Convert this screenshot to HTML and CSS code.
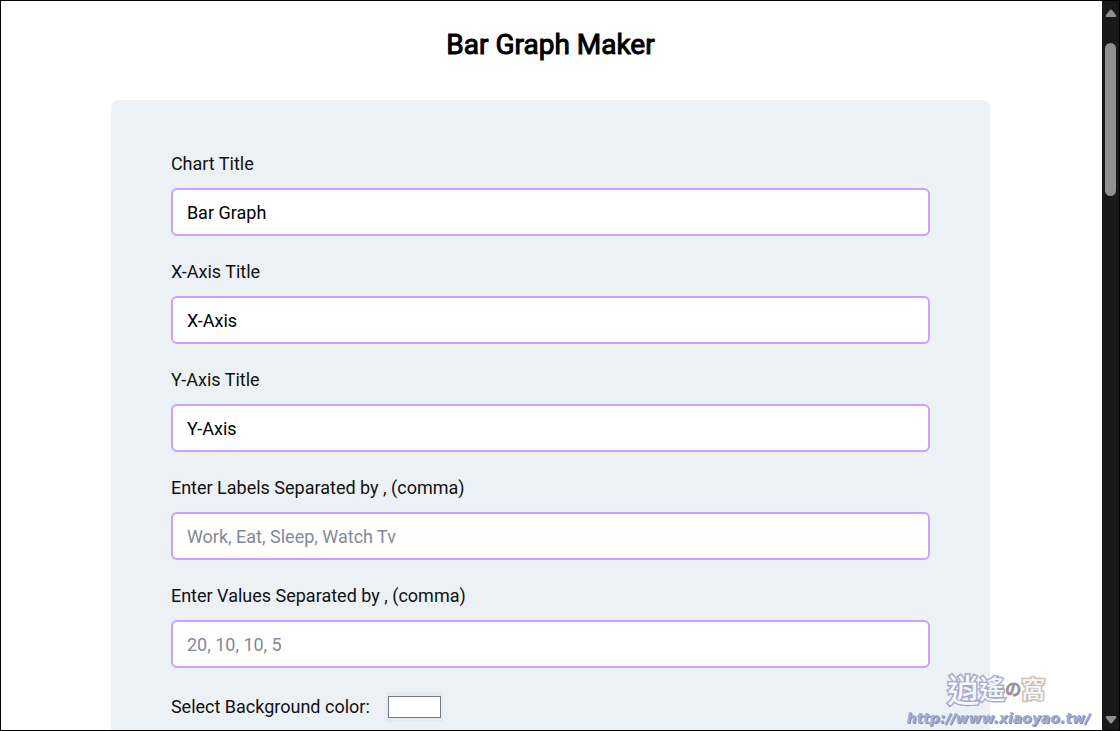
FILE: index.html
```html
<!DOCTYPE html>
<html lang="en">
<head>
<meta charset="utf-8">
<title>Bar Graph Maker</title>
<link rel="stylesheet" href="styles.css">
</head>
<body>
<div class="window">
  <main class="page">
    <h1 class="title">Bar Graph Maker</h1>
    <form class="panel">
      <div class="field">
        <label for="chart-title">Chart Title</label>
        <input class="text-input" id="chart-title" type="text" value="Bar Graph">
      </div>
      <div class="field">
        <label for="x-title">X-Axis Title</label>
        <input class="text-input" id="x-title" type="text" value="X-Axis">
      </div>
      <div class="field">
        <label for="y-title">Y-Axis Title</label>
        <input class="text-input" id="y-title" type="text" value="Y-Axis">
      </div>
      <div class="field">
        <label for="labels">Enter Labels Separated by , (comma)</label>
        <input class="text-input" id="labels" type="text" placeholder="Work, Eat, Sleep, Watch Tv">
      </div>
      <div class="field">
        <label for="values">Enter Values Separated by , (comma)</label>
        <input class="text-input" id="values" type="text" placeholder="20, 10, 10, 5">
      </div>
      <div class="color-field">
        <label for="background">Select Background color:</label>
        <input class="swatch" id="background" type="color" value="#ffffff">
      </div>
    </form>
  </main>
  <div class="scrollbar" aria-hidden="true">
    <svg class="arrow" viewBox="0 0 12 8"><path d="M5 1Q6 0 7 1L11 6Q12 8 10 8H2Q0 8 1 6Z"/></svg>
    <div class="track"><div class="thumb"></div></div>
    <svg class="arrow" viewBox="0 0 12 8"><path d="M5 7Q6 8 7 7L11 2Q12 0 10 0H2Q0 0 1 2Z"/></svg>
  </div>
  <div class="watermark">
    <div class="brand" lang="zh-Hant"><span class="blue">逍</span><span class="violet">遙</span><span class="small">の</span><span class="tan">窩</span></div>
    <a class="site" href="http://www.xiaoyao.tw/">http://www.xiaoyao.tw/</a>
  </div>
</div>
</body>
</html>
```
FILE: styles.css
```css
* { box-sizing: border-box; }
body {
  margin: 0;
  background: #fff;
  color: #111;
  font: 18px/24px Roboto, sans-serif;
}
.window {
  position: relative;
  display: flex;
  height: 100vh;
  border: 1px solid #000;
  overflow: hidden;
}
.page { flex: 1; padding: 26px 2px 0 0; overflow: hidden; }
.title {
  margin: 0 0 37px;
  color: #000;
  font-size: 28px;
  font-weight: 400;
  line-height: 36px;
  text-align: center;
  -webkit-text-stroke: 1px #000;
}
.panel {
  width: 80%;
  margin: 0 auto;
  padding: 52px 60px 60px;
  border-radius: 8px;
  background: #ecf1f6;
}
.field { display: flex; flex-direction: column; gap: 12px; margin-bottom: 24px; }
.text-input {
  width: 100%;
  height: 48px;
  padding: 0 14px;
  border: 2px solid #c9a0fa;
  border-radius: 6px;
  background: #fff;
  color: #000;
  font: inherit;
}
.text-input::placeholder { color: #858994; opacity: 1; }
.color-field { display: flex; align-items: center; gap: 16px; }
.swatch {
  width: 57px;
  height: 30px;
  padding: 0;
  border: 2px solid #e8e9eb;
  background: #e8e9eb;
}
.swatch::-webkit-color-swatch-wrapper { padding: 2px 0; }
.swatch::-webkit-color-swatch { border: 1px solid #777984; }
.scrollbar {
  display: flex;
  flex-direction: column;
  align-items: center;
  gap: 4px;
  width: 17px;
  padding: 8px 0 6px;
  background: #191919;
}
.arrow { width: 12px; height: 8px; fill: #8f9092; }
.track { flex: 1; padding-top: 22px; }
.thumb { width: 11px; height: 153px; border-radius: 6px; background: #8f9092; }
.watermark { position: absolute; right: 29px; bottom: 4px; }
.brand {
  display: flex;
  align-items: center;
  justify-content: center;
  padding: 0 4px 4px 0;
  font-family: "Noto Sans CJK TC", sans-serif;
  font-weight: 500;
  line-height: 36px;
  color: #f6f7fc;
  paint-order: stroke fill;
}
.blue { font-size: 32px; -webkit-text-stroke: 3px #a3a8cc; }
.violet { font-size: 26px; -webkit-text-stroke: 3px #abacc5; }
.small { font-size: 16px; color: #968f9c; -webkit-text-stroke: 1px #a39b9f; }
.tan { font-size: 24px; -webkit-text-stroke: 3px #cdc1ad; }
.site {
  display: block;
  color: #a5abd2;
  font: italic 700 14px/16px "DejaVu Sans", sans-serif;
  text-decoration: none;
  text-shadow: 1px 1px #8289bb;
}
```
